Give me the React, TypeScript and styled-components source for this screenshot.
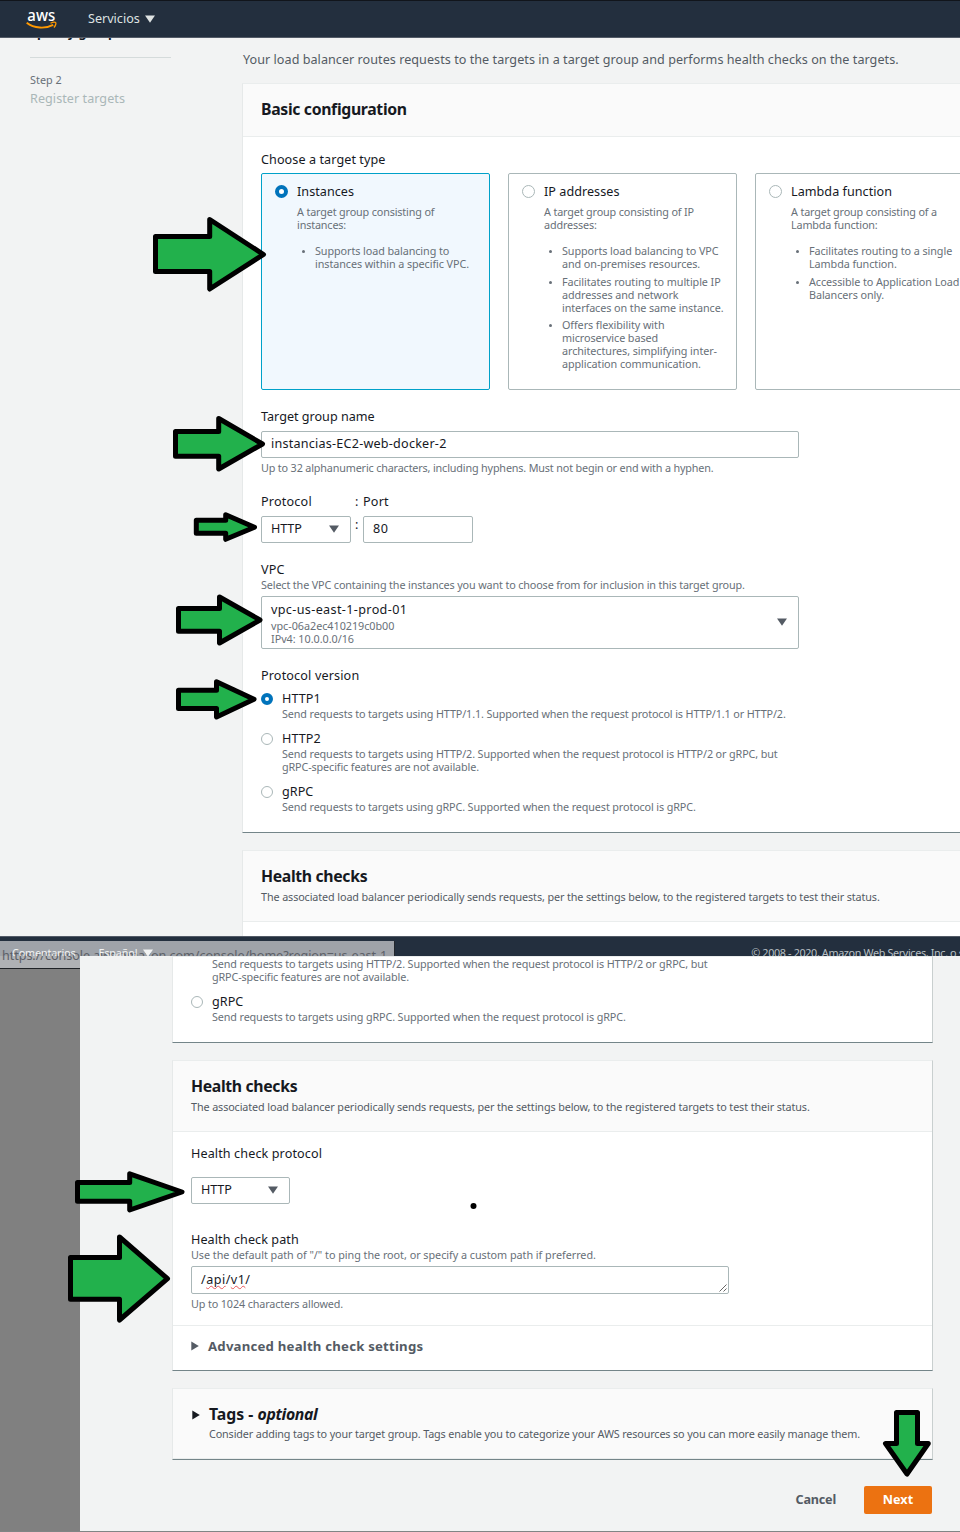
import React from 'react';
import styled, { createGlobalStyle } from 'styled-components';

const Global = createGlobalStyle`
  *, *::before, *::after { box-sizing: border-box; }
  body {
    margin: 0;
    background: #808080;
    color: #16191f;
    font: 12.6px/20px "Noto Sans", sans-serif;
    letter-spacing: 0.05px;
    overflow: hidden;
  }
  h2, p, ul { margin: 0; padding: 0; font-weight: inherit; font-size: inherit; }
`;

type Track = { $track?: number };
const tracking = (fallback: number) => ({ $track }: Track) => `letter-spacing: ${$track ?? fallback}px;`;

/* ---------- page frame ---------- */

const Page = styled.div`
  position: relative;
  width: 960px;
  height: 1532px;
  overflow: hidden;
  border-bottom: 1px solid #808585;
`;

const UpperWindow = styled.section`
  display: flex;
  flex-direction: column;
  height: 969px;
  overflow: hidden;
`;

const LowerWindow = styled.section`
  position: relative;
  z-index: 2;
  height: 575px;
  margin: -13px 0 0 80px;
  padding: 0 27px 0 92px;
  overflow: hidden;
  background: #f2f3f3;
`;

const TopBar = styled.header`
  display: flex;
  align-items: center;
  gap: 30px;
  flex: none;
  height: 38px;
  padding-left: 26px;
  background: #232f3e;
  border-top: 1px solid #11151b;
  border-bottom: 1px solid #535b67;
`;

const NavItem = styled.div`
  display: flex;
  align-items: center;
  gap: 5px;
  color: #dfe3e3;
  letter-spacing: 0;
`;

const Workspace = styled.div`
  display: flex;
  flex: none;
  height: 898px;
  overflow: hidden;
  background: #f2f3f3;
`;

const Steps = styled.nav`
  flex: none;
  width: 242px;
  padding-left: 30px;
`;

const CurrentStep = styled.div`
  height: 20px;
  margin-top: -15px;
  font-weight: 700;
`;

const StepDivider = styled.hr`
  width: 141px;
  height: 1px;
  margin: 14px 0 15px;
  border: 0;
  background: #d5dbdb;
`;

const StepNumber = styled.div`
  height: 13px;
  font-size: 10.8px;
  line-height: 13px;
  color: #687078;
`;

const StepName = styled.div`
  margin-top: 3px;
  color: #aab7b8;
`;

const Main = styled.main`
  flex: none;
  width: 761px;
  padding-top: 12px;
`;

const Intro = styled.p`
  height: 20px;
  margin-bottom: 13px;
  padding-left: 1px;
  white-space: nowrap;
  color: #545b64;
  letter-spacing: 0.04px;
`;

const Footer = styled.footer`
  position: relative;
  display: flex;
  flex: none;
  gap: 23px;
  height: 20px;
  padding: 9px 0 0 12px;
  overflow: hidden;
  background: #232f3e;
  border-top: 1px solid #535b67;
  color: #f2f3f3;
  font-size: 10.8px;
  white-space: nowrap;
  letter-spacing: -0.15px;
`;

const FooterLink = styled.span`
  position: relative;
  z-index: 1;
  display: flex;
  align-items: center;
  height: 14px;
  line-height: 14px;
  gap: 6px;
`;

const Copyright = styled.span`
  height: 14px;
  margin-left: 575px;
  line-height: 14px;
  color: #b9c0c4;
  letter-spacing: -0.36px;
`;

const StatusUrl = styled.div`
  position: absolute;
  top: 941px;
  left: 0;
  width: 395px;
  height: 28px;
  padding: 5px 0 0 2px;
  overflow: hidden;
  background: rgba(184, 186, 190, 0.84);
  border-right: 1px solid #22262c;
  border-bottom: 1px solid #1f2226;
  color: #5c6067;
  white-space: nowrap;
  letter-spacing: -0.06px;
`;

/* ---------- cards ---------- */

const Card = styled.section`
  width: 761px;
  margin-bottom: 17px;
  background: #fff;
  border: 1px solid;
  border-color: #eaeded #c9cfcf #748589 #e6e9e9;
`;

const CardHeader = styled.header<{ $height?: number; $indent?: boolean }>`
  position: relative;
  height: ${p => p.$height ?? 53}px;
  padding: 15px 18px 0 ${p => (p.$indent ? 36 : 18)}px;
  background: #fafafa;
  border-bottom: 1px solid #eaeded;
`;

const Heading = styled.h2<Track>`
  height: 20px;
  font-size: 15.8px;
  font-weight: 700;
  white-space: nowrap;
  ${tracking(-0.34)}
`;

const Lead = styled.p<Track & { $top?: number }>`
  margin-top: ${p => p.$top ?? 4}px;
  font-size: 10.8px;
  line-height: 13px;
  color: #545b64;
  white-space: nowrap;
  ${tracking(-0.11)}
`;

const CardBody = styled.div<{ $top?: number }>`
  padding: ${p => p.$top ?? 12}px 18px 19px;
`;

/* ---------- form parts ---------- */

const Field = styled.div<{ $gap?: number }>`
  display: flex;
  flex-direction: column;
  align-items: flex-start;
  margin-bottom: ${p => p.$gap ?? 16}px;
`;

const Label = styled.div<Track & { $space?: number }>`
  height: 20px;
  margin-bottom: ${p => p.$space ?? 5}px;
  padding-top: 1px;
  white-space: nowrap;
  ${tracking(0.08)}
`;

const Hint = styled.div<Track>`
  font-size: 10.8px;
  line-height: 13px;
  color: #687078;
  white-space: pre;
  ${tracking(-0.13)}
`;

const HintAbove = styled(Hint)`
  margin: -1px 0 5px;
`;

const HintBelow = styled(Hint)`
  margin-top: 3px;
`;

const Control = styled.div<Track & { $width: number; $height?: number }>`
  display: flex;
  align-items: center;
  justify-content: space-between;
  position: relative;
  width: ${p => p.$width}px;
  height: ${p => p.$height ?? 27}px;
  padding: 0 11.5px 1px 9px;
  background: #fff;
  border: 1px solid #aab7b8;
  border-radius: 2px;
  white-space: nowrap;
  ${tracking(0.05)}
`;

const Selected = styled.div`
  padding-top: 1px;
`;

const VpcName = styled.div`
  line-height: 18px;
  letter-spacing: 0.36px;
`;

const Inline = styled.div`
  display: flex;
`;

const Colon = styled.div`
  display: flex;
  flex-direction: column;
  gap: 3px;
  width: 12px;
  padding: 1px 0 0 4px;
`;

const Misspelt = styled.span`
  text-decoration: underline wavy #e8565a 1px;
  text-underline-offset: 1px;
  text-decoration-skip-ink: none;
`;

const Grip = styled.svg`
  position: absolute;
  right: 1px;
  bottom: 1px;
`;

const RadioMark = styled.span<{ $on?: boolean; $size: number }>`
  flex: none;
  width: ${p => p.$size}px;
  height: ${p => p.$size}px;
  border-radius: 50%;
  background: #fff;
  border: ${p => (p.$on ? '4px solid #0073bb' : '1px solid #aab7b8')};
`;

const Tiles = styled.div`
  display: flex;
  gap: 18px;
`;

const Tile = styled.div<{ $on?: boolean }>`
  display: flex;
  align-items: flex-start;
  gap: 9px;
  flex: none;
  width: 229px;
  height: 217px;
  padding: 8px 0 0 13px;
  background: ${p => (p.$on ? '#f1f8fe' : '#fff')};
  border: 1px solid ${p => (p.$on ? '#00a1c9' : '#aab7b8')};
  border-radius: 2px;

  ${RadioMark} { margin-top: 3px; }
`;

const TileTitle = styled.div<Track>`
  height: 20px;
  margin-bottom: 3px;
  white-space: nowrap;
  ${tracking(0.04)}
`;

const Bullets = styled.ul`
  margin-top: 13px;
  list-style: none;
`;

const Bullet = styled.li`
  position: relative;
  margin-bottom: 4.5px;
  padding-left: 18px;
  font-size: 10.8px;
  line-height: 13px;
  letter-spacing: -0.08px;
  color: #687078;
  white-space: pre;

  &::before {
    content: '';
    position: absolute;
    top: 6px;
    left: 5px;
    width: 3px;
    height: 3px;
    border-radius: 50%;
    background: #687078;
  }
`;

const OptionList = styled.div<{ $shift?: number }>`
  display: flex;
  flex-direction: column;
  gap: 8px;
  margin-top: ${p => p.$shift ?? 0}px;
`;

const OptionRow = styled.div`
  display: flex;
  gap: 9px;

  > ${RadioMark} { margin-top: 5px; }
`;

const OptionText = styled.div`
  ${Hint} { margin-top: -1px; letter-spacing: -0.125px; }
`;

const OptionName = styled.div`
  height: 20px;
  padding-top: 1px;
`;

/* ---------- lower cards ---------- */

const ExpandRow = styled.div`
  display: flex;
  align-items: center;
  gap: 9px;
  height: 45px;
  padding: 0 18px 4px;
  border-top: 1px solid #eaeded;
  color: #545b64;
  font-size: 13.2px;
  font-weight: 700;
  letter-spacing: 0.21px;
`;

const HeadingMarker = styled.span`
  position: absolute;
  top: 21px;
  left: 19px;
  display: flex;
`;

const Optional = styled.em`
  letter-spacing: -0.35px;
`;

const Actions = styled.div`
  display: flex;
  justify-content: flex-end;
  align-items: center;
  gap: 28px;
  margin-top: 26px;
`;

const LinkButton = styled.span`
  color: #545b64;
  font-weight: 700;
  letter-spacing: -0.2px;
`;

const PrimaryButton = styled.span`
  width: 68px;
  height: 28px;
  margin-right: 1px;
  border-radius: 2px;
  background: #ec7211;
  color: #fff;
  font-weight: 700;
  line-height: 27px;
  text-align: center;
`;

const Annotations = styled.svg`
  position: absolute;
  inset: 0;
  z-index: 3;
  pointer-events: none;
`;

const Caret = ({ color = '#545b64' }: { color?: string }) => (
  <svg width="10" height="8" viewBox="0 0 10 8"><path d="M0 0.4H10L5 7.8Z" fill={color} /></svg>
);

const SideCaret = ({ color }: { color: string }) => (
  <svg width="8" height="10" viewBox="0 0 8 10"><path d="M0.3 0.4V9.6L7.8 5Z" fill={color} /></svg>
);

const AwsLogo = () => (
  <svg width="32" height="24" viewBox="0 0 32 24">
    <text x="1.3" y="13.6" fontFamily="Noto Sans, sans-serif" fontSize="17" fontWeight="500" fill="#fff"
      textLength="28" lengthAdjust="spacingAndGlyphs">aws</text>
    <path d="M0.7 15.8C8 21.600 19.500 22 27.200 17.900" fill="none" stroke="#f90" strokeWidth="1.900" />
    <path d="M24.500 16.300C26.500 15.200 29 15 29.700 15.600C30.300 16.400 29.500 19 27.900 20.500" fill="none" stroke="#f90" strokeWidth="1.300" />
  </svg>
);

/* ---------- content ---------- */

const tiles = [
  {
    title: 'Instances', on: true,
    text: 'A target group consisting of\ninstances:',
    items: ['Supports load balancing to\ninstances within a specific VPC.'],
  },
  {
    title: 'IP addresses',
    text: 'A target group consisting of IP\naddresses:',
    items: [
      'Supports load balancing to VPC\nand on-premises resources.',
      'Facilitates routing to multiple IP\naddresses and network\ninterfaces on the same instance.',
      'Offers flexibility with\nmicroservice based\narchitectures, simplifying inter-\napplication communication.',
    ],
  },
  {
    title: 'Lambda function',
    text: 'A target group consisting of a\nLambda function:',
    items: ['Facilitates routing to a single\nLambda function.', 'Accessible to Application Load\nBalancers only.'],
  },
];

const http1 = { name: 'HTTP1', on: true, text: 'Send requests to targets using HTTP/1.1. Supported when the request protocol is HTTP/1.1 or HTTP/2.' };
const http2 = { name: 'HTTP2', on: false, text: 'Send requests to targets using HTTP/2. Supported when the request protocol is HTTP/2 or gRPC, but\ngRPC-specific features are not available.' };
const grpc = { name: 'gRPC', on: false, text: 'Send requests to targets using gRPC. Supported when the request protocol is gRPC.' };

const Option = ({ name, on, text }: typeof http1) => (
  <OptionRow>
    <RadioMark $size={12} $on={on} />
    <OptionText>
      <OptionName>{name}</OptionName>
      <Hint>{text}</Hint>
    </OptionText>
  </OptionRow>
);

const HealthHeader = () => (
  <CardHeader $height={71}>
    <Heading>Health checks</Heading>
    <Lead>The associated load balancer periodically sends requests, per the settings below, to the registered targets to test their status.</Lead>
  </CardHeader>
);

const arrows = [
  '155.500,236.500 209.700,236.500 209.700,219.500 263.500,254.500 209.700,289 209.700,271.500 155.500,271.500',
  '175.500,431.500 218.700,431.500 218.700,418.500 262.500,444 218.700,469 218.700,456.300 175.500,456.300',
  '196.300,520.300 225.700,520.300 225.700,514.800 254.500,527.300 225.700,539.300 225.700,533.300 196.300,533.300',
  '178.500,608.500 219.500,608.500 219.500,597 260,620 219.500,643 219.500,631.300 178.500,631.300',
  '178.500,690.300 216.500,690.300 216.500,681.800 254,699.300 216.500,717 216.500,708.500 178.500,708.500',
  '77.500,1182.500 129.700,1182.500 129.700,1173.800 182,1192 129.700,1210 129.700,1201.300 77.500,1201.300',
  '70.500,1257.500 119.500,1257.500 119.500,1237 167.500,1278.700 119.500,1320 119.500,1299.300 70.500,1299.300',
  '896.500,1412.500 917.500,1412.500 917.500,1443.500 928.300,1443.500 907,1474 885.500,1443.500 896.500,1443.500',
];

export default function App() {
  return (
    <Page>
      <Global />
      <UpperWindow>
        <TopBar>
          <AwsLogo />
          <NavItem>Servicios <Caret color="#dfe3e3" /></NavItem>
        </TopBar>
        <Workspace>
          <Steps>
            <CurrentStep>Specify group details</CurrentStep>
            <StepDivider />
            <StepNumber>Step 2</StepNumber>
            <StepName>Register targets</StepName>
          </Steps>
          <Main>
            <Intro>Your load balancer routes requests to the targets in a target group and performs health checks on the targets.</Intro>
            <Card>
              <CardHeader><Heading>Basic configuration</Heading></CardHeader>
              <CardBody>
                <Field>
                  <Label $space={4}>Choose a target type</Label>
                  <Tiles>
                    {tiles.map(t => (
                      <Tile key={t.title} $on={t.on}>
                        <RadioMark $size={13} $on={t.on} />
                        <div>
                          <TileTitle>{t.title}</TileTitle>
                          <Hint $track={-0.15}>{t.text}</Hint>
                          <Bullets>{t.items.map(i => <Bullet key={i}>{i}</Bullet>)}</Bullets>
                        </div>
                      </Tile>
                    ))}
                  </Tiles>
                </Field>
                <Field $gap={17}>
                  <Label $track={0}>Target group name</Label>
                  <Control $width={538} $track={0.22}>instancias-EC2-web-docker-2</Control>
                  <HintBelow $track={-0.16}>Up to 32 alphanumeric characters, including hyphens. Must not begin or end with a hyphen.</HintBelow>
                </Field>
                <Inline>
                  <Field>
                    <Label $track={0.2}>Protocol</Label>
                    <Control $width={90} $track={-0.15}>HTTP <Caret /></Control>
                  </Field>
                  <Colon><span>:</span><span>:</span></Colon>
                  <Field>
                    <Label $track={0.2}>Port</Label>
                    <Control $width={110} $track={0.5}>80</Control>
                  </Field>
                </Inline>
                <Field>
                  <Label $track={0.2} $space={0}>VPC</Label>
                  <HintAbove $track={-0.135}>Select the VPC containing the instances you want to choose from for inclusion in this target group.</HintAbove>
                  <Control $width={538} $height={53}>
                    <Selected>
                      <VpcName>vpc-us-east-1-prod-01</VpcName>
                      <Hint $track={-0.03}>{'vpc-06a2ec410219c0b00\nIPv4: 10.0.0.0/16'}</Hint>
                    </Selected>
                    <Caret />
                  </Control>
                </Field>
                <Label $space={3} $track={0.15}>Protocol version</Label>
                <OptionList>
                  <Option {...http1} />
                  <Option {...http2} />
                  <Option {...grpc} />
                </OptionList>
              </CardBody>
            </Card>
            <Card><HealthHeader /><CardBody /></Card>
          </Main>
        </Workspace>
        <Footer>
          <FooterLink>Comentarios</FooterLink>
          <FooterLink>Español <Caret color="#f2f3f3" /></FooterLink>
          <Copyright>© 2008 - 2020, Amazon Web Services, Inc. o sus filiales.</Copyright>
        </Footer>
        <StatusUrl>https://console.aws.amazon.com/console/home?region=us-east-1</StatusUrl>
      </UpperWindow>

      <LowerWindow>
        <Card>
          <CardBody>
            <OptionList $shift={-31}>
              <Option {...http2} />
              <Option {...grpc} />
            </OptionList>
          </CardBody>
        </Card>
        <Card>
          <HealthHeader />
          <CardBody $top={11}>
            <Field $gap={25}>
              <Label $space={14} $track={0.11}>Health check protocol</Label>
              <Control $width={99} $track={-0.15}>HTTP <Caret /></Control>
            </Field>
            <Field $gap={-4}>
              <Label $track={0.08} $space={0}>Health check path</Label>
              <HintAbove $track={-0.03}>Use the default path of "/" to ping the root, or specify a custom path if preferred.</HintAbove>
              <Control $width={538} $height={28} $track={0.47}>
                <span>/<Misspelt>api</Misspelt>/<Misspelt>v1</Misspelt>/</span>
                <Grip width="8" height="8" viewBox="0 0 8 8"><path d="M0.500 7.500L7.500 0.500M4.500 7.500L7.500 4.500" stroke="#555" strokeWidth="0.900" /></Grip>
              </Control>
              <HintBelow>Up to 1024 characters allowed.</HintBelow>
            </Field>
          </CardBody>
          <ExpandRow><SideCaret color="#545b64" />Advanced health check settings</ExpandRow>
        </Card>
        <Card>
          <CardHeader $height={70} $indent>
            <HeadingMarker><SideCaret color="#16191f" /></HeadingMarker>
            <Heading $track={0}>Tags - <Optional>optional</Optional></Heading>
            <Lead $track={-0.14} $top={3}>Consider adding tags to your target group. Tags enable you to categorize your AWS resources so you can more easily manage them.</Lead>
          </CardHeader>
        </Card>
        <Actions>
          <LinkButton>Cancel</LinkButton>
          <PrimaryButton>Next</PrimaryButton>
        </Actions>
      </LowerWindow>

      <Annotations width="960" height="1532" viewBox="0 0 960 1532">
        {arrows.map(points => (
          <polygon key={points} points={points} fill="#22b14c" stroke="#000" strokeWidth="5" strokeLinejoin="round" />
        ))}
        <circle cx="473.500" cy="1206" r="3" />
      </Annotations>
    </Page>
  );
}
